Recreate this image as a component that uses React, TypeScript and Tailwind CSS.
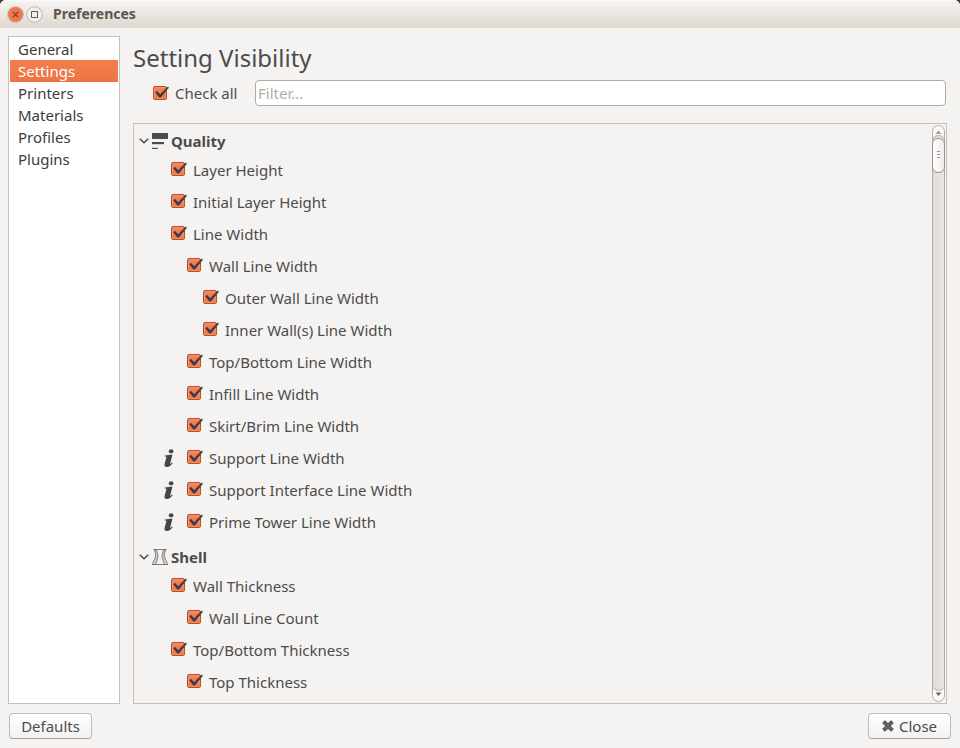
import React from "react";

type Row = { label: string; depth: number; info?: boolean };

const quality: Row[] = [
  { label: "Layer Height", depth: 0 },
  { label: "Initial Layer Height", depth: 0 },
  { label: "Line Width", depth: 0 },
  { label: "Wall Line Width", depth: 1 },
  { label: "Outer Wall Line Width", depth: 2 },
  { label: "Inner Wall(s) Line Width", depth: 2 },
  { label: "Top/Bottom Line Width", depth: 1 },
  { label: "Infill Line Width", depth: 1 },
  { label: "Skirt/Brim Line Width", depth: 1 },
  { label: "Support Line Width", depth: 1, info: true },
  { label: "Support Interface Line Width", depth: 1, info: true },
  { label: "Prime Tower Line Width", depth: 1, info: true },
];

const shell: Row[] = [
  { label: "Wall Thickness", depth: 0 },
  { label: "Wall Line Count", depth: 1 },
  { label: "Top/Bottom Thickness", depth: 0 },
  { label: "Top Thickness", depth: 1 },
];

const pages = ["General", "Settings", "Printers", "Materials", "Profiles", "Plugins"];
const indents = ["pl-[37px]", "pl-[53px]", "pl-[69px]"];

function Check() {
  return (
    <svg width="17" height="16" viewBox="0 0 17 16" className="shrink-0">
      <defs>
        <linearGradient id="box" x1="0" y1="0" x2="0" y2="1">
          <stop offset="0" stopColor="#f8845a" />
          <stop offset="1" stopColor="#f07444" />
        </linearGradient>
      </defs>
      <rect x="0.5" y="1.5" width="13" height="13" rx="1.5" fill="url(#box)" stroke="#b5502c" />
      <rect x="1.5" y="2.5" width="11" height="11" rx="1" fill="none" stroke="#f79a76" strokeOpacity="0.6" />
      <path d="M2.3 6.9 L4.3 6.3 L7.1 9.4 L14.4 2.1 L15.9 2.4 L7.8 12.3 L6.3 12.3Z" fill="#3c3b3b" stroke="#3c3b3b" strokeWidth="0.3" strokeLinejoin="round" />
    </svg>
  );
}

function Info() {
  return (
    <svg width="11" height="18" viewBox="0 0 11 18" className="absolute left-[30px] top-[7px]" fill="#464646">
      <ellipse cx="7.1" cy="2.3" rx="2.4" ry="2.1" />
      <path d="M.8 6.4 L8.5 5.5 L6.3 14 C6 15.2 6.6 15 8 13.6 L8.6 14.2 C7 16.5 5.2 18 3 18 C.7 18 .2 16.7 .6 14.9 L2.3 8.6 C2.5 7.7 2 7.5 .7 7.6Z" />
    </svg>
  );
}

function QualityIcon() {
  return (
    <svg width="16" height="16" viewBox="0 0 16 16" fill="#4d4d4f">
      <path d="M0 0H16V6H0Z" />
      <path d="M0 9H12V11.2H0Z" />
      <path d="M0 14.8H6V16H0Z" />
    </svg>
  );
}

function ShellIcon() {
  return (
    <svg width="16" height="16" viewBox="0 0 16 16" fill="none" stroke="#5e5a5b" strokeWidth="0.8">
      <path d="M1.5 .5H14.5M0 15.5H16" />
      <path d="M2.3 .5C3 3 3.9 4.7 3.7 7C3.4 10 1.2 12 .5 15.5" />
      <path d="M4.3 .5C4.9 3.2 6.2 5 6 7.5C5.7 10.4 4.1 12.6 3.6 15.5" />
      <path d="M3.3 1C4 3.5 5.1 5 4.9 7.3C4.6 10 2.6 12.3 2.1 15" strokeDasharray="2 .8" strokeWidth="0.5" />
      <path d="M13.7 .5C13 3 12.1 4.7 12.3 7C12.6 10 14.8 12 15.5 15.5" />
      <path d="M11.7 .5C11.1 3.2 9.8 5 10 7.5C10.3 10.4 11.9 12.6 12.4 15.5" />
      <path d="M12.7 1C12 3.5 10.9 5 11.1 7.3C11.4 10 13.4 12.3 13.9 15" strokeDasharray="2 .8" strokeWidth="0.5" />
    </svg>
  );
}

function Category({ title, icon, rows }: { title: string; icon: React.ReactNode; rows: Row[] }) {
  return (
    <section>
      <div className="flex h-8 items-center pl-[5px] pt-1.5 font-bold">
        <svg width="10" height="6" viewBox="0 0 10 6" fill="none" stroke="#4a4a4a" strokeWidth="1.5">
          <path d="M.7 .7L5 4.8L9.3 .7" />
        </svg>
        <span className="-mt-px ml-[3px] mr-[3px]">{icon}</span>
        {title}
      </div>
      {rows.map((r) => (
        <div key={r.label} className={`relative flex h-8 items-center ${indents[r.depth]}`}>
          {r.info && <Info />}
          <span className="-mt-[3px] mr-[5px]"><Check /></span>
          {r.label}
        </div>
      ))}
    </section>
  );
}

export default function App() {
  return (
    <div className="h-[748px] w-[960px] overflow-hidden bg-[#3c3a38] font-['Noto_Sans',sans-serif] text-[15px] leading-[22px] text-[#4c4c4c]">
      <div className="flex h-full flex-col rounded-t-[6px] bg-[#f5f3f2]">
        <header className="flex h-7 shrink-0 items-center rounded-t-[6px] bg-linear-to-b from-[#f6f5f3] to-[#dfd7cf] pl-[7px] text-[14px] font-bold text-[#5b5652] shadow-[inset_0_1px_0_#fbfaf9]">
          <svg width="37" height="18" viewBox="0 0 37 18" className="mr-[9px] mt-px">
            <circle cx="8.5" cy="8.5" r="8" fill="#f0eae6" stroke="#c5bdb6" />
            <circle cx="8.5" cy="8.5" r="7.5" fill="#f1764a" />
            <path d="M5.9 5.9L11.1 11.1M11.1 5.9L5.9 11.1" stroke="#723f2c" strokeWidth="1.2" />
            <circle cx="27.5" cy="8.5" r="7.8" fill="#f3f0ed" stroke="#bdb6b0" />
            <rect x="24.5" y="5.5" width="6" height="6" fill="none" stroke="#625d59" />
          </svg>
          Preferences
        </header>
        <div className="flex h-[676px] shrink-0 pl-2 pt-2">
          <nav className="h-[668px] w-28 shrink-0 border border-[#c8c0b7] bg-white p-px text-[#3c3c3c]">
            {pages.map((p) => (
              <div key={p} className={`h-[22px] pl-2 ${p === "Settings" ? "bg-linear-to-b from-[#f37e4e] to-[#ed7442] text-white" : ""}`}>
                {p}
              </div>
            ))}
          </nav>
          <main className="ml-[13px] flex w-[814px] flex-col">
            <h1 className="h-11 pt-[7px] text-[24px] leading-[30px]">Setting Visibility</h1>
            <div className="flex h-[26px] items-center pl-5">
              <Check />
              <span className="ml-[5px] w-20">Check all</span>
              <input placeholder="Filter..." className="h-[26px] w-[691px] rounded-[4px] border border-[#b5aa9f] bg-white px-[2px] outline-none placeholder:text-[#aeafa9]" />
            </div>
            <div className="mt-[17px] flex h-[581px] justify-between border border-[#c8c0b7]">
              <div className="-mt-0.5">
                <Category title="Quality" icon={<QualityIcon />} rows={quality} />
                <Category title="Shell" icon={<ShellIcon />} rows={shell} />
              </div>
              <svg width="15" height="579" viewBox="0 0 15 579">
                <defs>
                  <linearGradient id="trough"><stop offset="0" stopColor="#e2dad4" /><stop offset="1" stopColor="#ebe7e4" /></linearGradient>
                  <linearGradient id="thumb"><stop offset="0" stopColor="#fff" /><stop offset="1" stopColor="#eeebe9" /></linearGradient>
                </defs>
                <rect x="1.5" y="1.5" width="12" height="576" rx="6" fill="#fbfafa" stroke="#b5aca4" />
                <path d="M1.5 17Q2 11.5 7.5 11.5T13.5 17V563Q12 566.5 7.5 566.5T1.5 563Z" fill="url(#trough)" stroke="#b5aca4" />
                <path d="M4.5 10L7.5 6.5L10.5 10Z" fill="#a19c98" />
                <path d="M4.5 568.5H10.5L7.5 572Z" fill="#66615d" />
                <rect x="1.5" y="14.5" width="12" height="34" rx="5.5" fill="url(#thumb)" stroke="#99928c" />
                <path d="M6 27.5H9M6 30.5H9M6 33.5H9" stroke="#99928c" />
              </svg>
            </div>
          </main>
        </div>
        <footer className="flex justify-between pl-[9px] pr-[9px] pt-[9px]">
          <button className="h-[26px] w-[83px] rounded-[4px] border border-[#c3bbb4] border-b-[#a9a098] bg-linear-to-b from-white to-[#f3f1f0] leading-[25px]">Defaults</button>
          <button className="flex h-[26px] w-[83px] items-center rounded-[4px] border border-[#c3bbb4] border-b-[#a9a098] bg-linear-to-b from-white to-[#f3f1f0] pl-[13px]">
            <svg width="12" height="12" viewBox="0 0 12 12" className="mr-[5px]">
              <path d="M3 .7L6 3.7L9 .7L11.3 3L8.3 6L11.3 9L9 11.3L6 8.3L3 11.3L.7 9L3.7 6L.7 3Z" fill="#66625f" stroke="#494542" />
            </svg>
            Close
          </button>
        </footer>
      </div>
    </div>
  );
}
